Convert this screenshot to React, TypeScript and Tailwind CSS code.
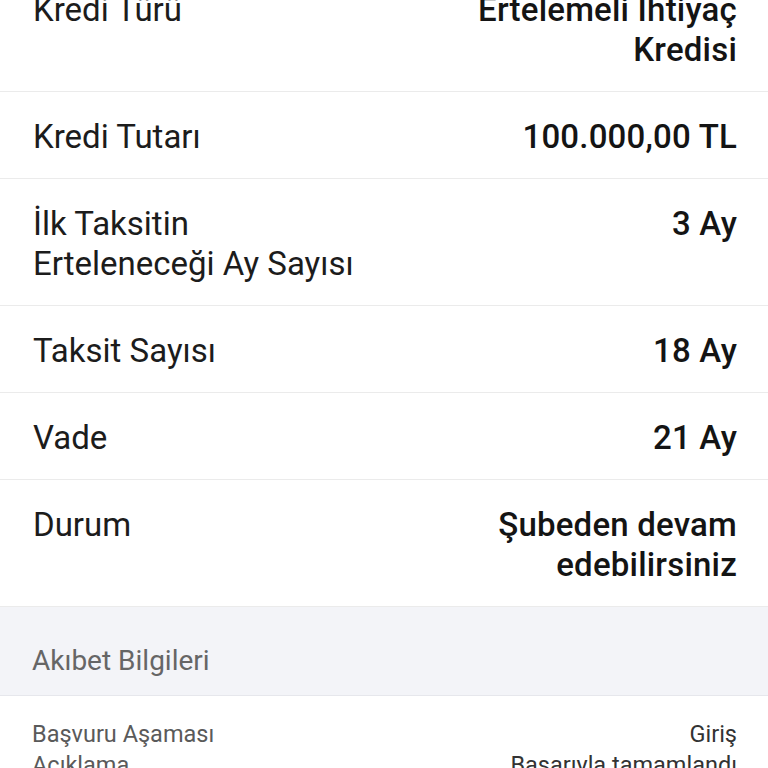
const ROWS: { label: string[]; value: string[] }[] = [
  { label: ["Kredi Türü"], value: ["Ertelemeli İhtiyaç", "Kredisi"] },
  { label: ["Kredi Tutarı"], value: ["100.000,00 TL"] },
  { label: ["İlk Taksitin", "Erteleneceği Ay Sayısı"], value: ["3 Ay"] },
  { label: ["Taksit Sayısı"], value: ["18 Ay"] },
  { label: ["Vade"], value: ["21 Ay"] },
  { label: ["Durum"], value: ["Şubeden devam", "edebilirsiniz"] },
];

export default function App() {
  return (
    <div className="h-[768px] overflow-hidden bg-white font-['Roboto',sans-serif]">
      <div className="-mt-[35px]">
        {ROWS.map((r, i) => (
          <div key={i} className="flex justify-between border-b border-[#ebebeb] pl-[33px] pr-[31px] pt-[25px] pb-[21px] text-[33px] leading-[40px]">
            <div className="text-[#1c1c1c]">
              {r.label.map((l) => (
                <div key={l}>{l}</div>
              ))}
            </div>
            <div className="text-right font-medium tracking-[0.2px] text-[#141414]">
              {r.value.map((v) => (
                <div key={v}>{v}</div>
              ))}
            </div>
          </div>
        ))}
      </div>
      <div className="border-b border-[#e6e7ec] bg-[#f3f4f8] px-[32px] pt-[37px] pb-[17px] text-[28px] leading-[34px] text-[#666666]">
        Akıbet Bilgileri
      </div>
      <div className="pl-[32px] pr-[31px] pt-[23px] text-[23.5px] leading-[31px] text-[#5a5a5a]">
        <div className="flex justify-between">
          <span>Başvuru Aşaması</span>
          <span className="text-[#333333]">Giriş</span>
        </div>
        <div className="flex justify-between">
          <span>Açıklama</span>
          <span className="text-[#333333]">Başarıyla tamamlandı</span>
        </div>
      </div>
    </div>
  );
}
